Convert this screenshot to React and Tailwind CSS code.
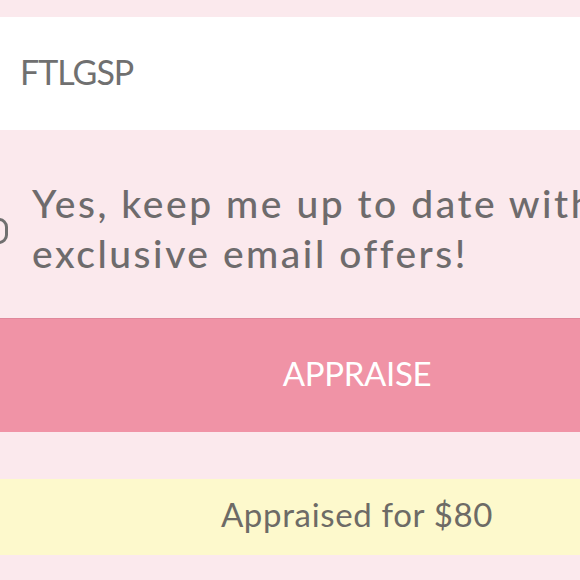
import React from 'react';

const App = () => {
    return (
        <div className="w-[580px] h-[580px] overflow-hidden bg-[#fbe9ed]" style={{ fontFamily: 'Lato, "Noto Sans", sans-serif' }}>
            <div className="w-[714px] pt-[17px]">
                {/* Code input */}
                <div className="h-[113px] bg-white flex items-center px-5">
                    <span className="text-[34px] text-[#707070] tracking-[-0.03em] mb-1">FTLGSP</span>
                </div>

                {/* Email opt-in */}
                <div className="flex items-center mt-[48px] -ml-[18px]">
                    <div className="w-[26px] h-[26px] shrink-0 rounded-[9px] border-[3px] border-[#707070] mt-[6px] mr-6" />
                    <p className="text-[39px] leading-[50px] text-[#6e6b6c] tracking-[0.065em] font-medium">
                        Yes, keep me up to date with exclusive email offers!
                    </p>
                </div>

                {/* Appraise button */}
                <button className="mt-[40px] w-full h-[114px] bg-[#f093a6] border-t border-[#e0889b] flex items-center justify-center">
                    <span className="text-[33px] text-white tracking-[-0.01em] mb-1">APPRAISE</span>
                </button>

                {/* Result */}
                <div className="mt-[47px] h-[76px] bg-[#fdf9cc] flex items-center justify-center">
                    <span className="text-[33px] text-[#6d6b66] tracking-[0.02em] mb-1">Appraised for $80</span>
                </div>
            </div>
        </div>
    );
};

export default App;
